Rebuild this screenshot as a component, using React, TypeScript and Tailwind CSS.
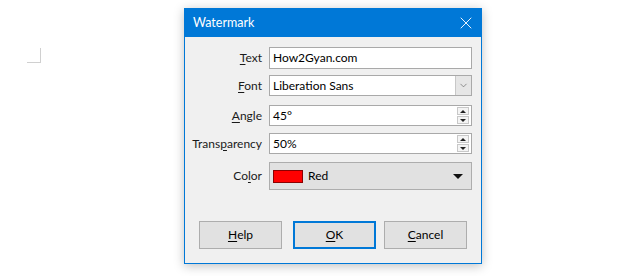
import { ChevronDown, X } from "lucide-react";

const font = { fontFamily: '"Segoe UI", Lato, "Liberation Sans", sans-serif' };

const Label = ({ text, u }: { text: string; u: number }) => (
  <div className="w-[84px] shrink-0 pr-[7px] text-right text-[#1a1a1a]">
    {text.slice(0, u)}
    <span className="underline underline-offset-2">{text[u]}</span>
    {text.slice(u + 1)}
  </div>
);

const Spin = () => (
  <div className="flex flex-col items-center justify-center gap-[1px] pr-[2px]">
    <div className="flex h-[8px] w-[12px] items-center justify-center border border-[#c8c8c8] bg-[#f4f4f4]">
      <div className="h-0 w-0 border-x-[3px] border-b-[3px] border-x-transparent border-b-[#222]" />
    </div>
    <div className="flex h-[8px] w-[12px] items-center justify-center border border-[#c8c8c8] bg-[#f4f4f4]">
      <div className="h-0 w-0 border-x-[3px] border-t-[3px] border-x-transparent border-t-[#222]" />
    </div>
  </div>
);

export default function App() {
  return (
    <div className="relative h-[276px] w-[640px] bg-white" style={font}>
      {/* page corner mark */}
      <div className="absolute left-[27px] top-[48px] h-[15px] w-[14px] border-b border-r border-[#d0d0d0]" />

      <div className="ml-[184px] pt-[8px]">
        <div className="flex h-[256px] w-[298px] flex-col border border-[#0078d7] bg-[#f0f0f0] text-[12px] shadow-[0_2px_10px_rgba(0,0,0,0.25)]">
          <div className="flex h-[28px] items-center justify-between bg-[#0078d7] pl-[8px] pr-[5px] text-[12.5px] text-white">
            <span>Watermark</span>
            <X className="h-[20px] w-[20px]" strokeWidth={1.1} />
          </div>

          <div className="flex flex-col pr-[9px] pt-[10px]">
            <div className="flex h-[22px] items-center">
              <Label text="Text" u={0} />
              <div className="flex h-full flex-1 items-center border border-[#a9a9a9] bg-white pl-[3px] text-black">
                How2Gyan.com
              </div>
            </div>

            <div className="mt-[6px] flex h-[21px] items-center">
              <Label text="Font" u={0} />
              <div className="flex h-full flex-1 items-center border border-[#a9a9a9] bg-white pl-[3px] text-black">
                <span className="flex-1">Liberation Sans</span>
                <div className="flex h-full w-[16px] items-center justify-center border-l border-[#c8c8c8] bg-[#e6e6e6]">
                  <ChevronDown className="h-[11px] w-[11px] text-[#555]" strokeWidth={1.3} />
                </div>
              </div>
            </div>

            <div className="mt-[9px] flex h-[21px] items-center">
              <Label text="Angle" u={0} />
              <div className="flex h-full flex-1 items-center border border-[#a9a9a9] bg-white pl-[3px] text-black">
                <span className="flex-1">45°</span>
                <Spin />
              </div>
            </div>

            <div className="mt-[7px] flex h-[21px] items-center">
              <Label text="Transparency" u={5} />
              <div className="flex h-full flex-1 items-center border border-[#a9a9a9] bg-white pl-[3px] text-black">
                <span className="flex-1">50%</span>
                <Spin />
              </div>
            </div>

            <div className="mt-[8px] flex h-[28px] items-center">
              <Label text="Color" u={2} />
              <div className="flex h-full flex-1 items-center border border-[#adadad] bg-[#e1e1e1] pl-[3px] text-black">
                <div className="h-[13px] w-[30px] border border-[#8a0000] bg-[#ff0000]" />
                <span className="ml-[5px] flex-1">Red</span>
                <div className="mr-[8px] h-0 w-0 border-x-[5px] border-t-[5px] border-x-transparent border-t-[#111]" />
              </div>
            </div>
          </div>

          <div className="mt-auto flex pb-[14px] pl-[14px] text-black">
            <button className="flex h-[28px] w-[83px] items-center justify-center border border-[#adadad] bg-[#e1e1e1]">
              <span className="underline underline-offset-2">H</span>elp
            </button>
            <button className="ml-[11px] flex h-[28px] w-[83px] items-center justify-center border-2 border-[#0078d7] bg-[#e1e1e1]">
              <span className="underline underline-offset-2">O</span>K
            </button>
            <button className="ml-[8px] flex h-[28px] w-[83px] items-center justify-center border border-[#adadad] bg-[#e1e1e1]">
              <span className="underline underline-offset-2">C</span>ancel
            </button>
          </div>
        </div>
      </div>
    </div>
  );
}
